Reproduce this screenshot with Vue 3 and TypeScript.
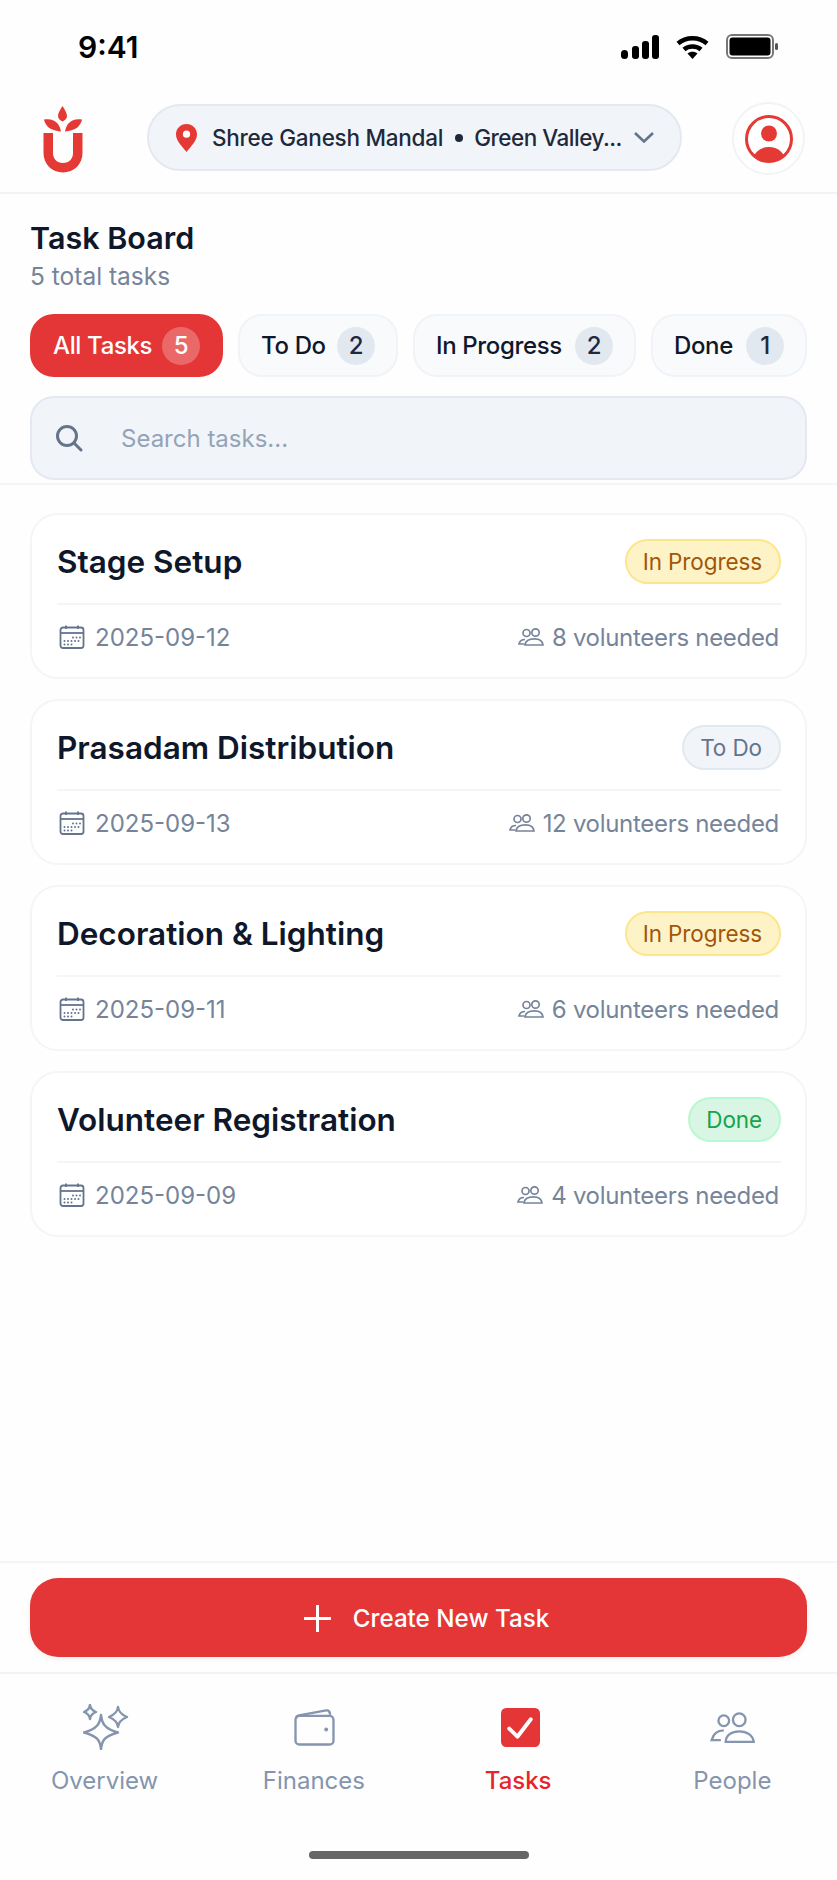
<script setup lang="ts">
interface Tab {
  label: string;
  count: number;
}

interface Task {
  title: string;
  status: 'progress' | 'todo' | 'done';
  statusLabel: string;
  date: string;
  volunteers: number;
}

const tabs: Tab[] = [
  { label: 'All Tasks', count: 5 },
  { label: 'To Do', count: 2 },
  { label: 'In Progress', count: 2 },
  { label: 'Done', count: 1 },
];

const tasks: Task[] = [
  { title: 'Stage Setup', status: 'progress', statusLabel: 'In Progress', date: '2025-09-12', volunteers: 8 },
  { title: 'Prasadam Distribution', status: 'todo', statusLabel: 'To Do', date: '2025-09-13', volunteers: 12 },
  { title: 'Decoration & Lighting', status: 'progress', statusLabel: 'In Progress', date: '2025-09-11', volunteers: 6 },
  { title: 'Volunteer Registration', status: 'done', statusLabel: 'Done', date: '2025-09-09', volunteers: 4 },
];

const dots: number[][] = [
  [14, 12.5], [17.5, 12.5], [21, 12.5],
  [5.5, 16], [9, 16], [12.5, 16], [16, 16], [19.5, 16],
  [5.5, 19.5], [9, 19.5], [12.5, 19.5],
];
</script>

<template>
  <div class="screen">
    <!-- Status bar -->
    <div class="status-bar">
      <span class="time">9:41</span>
      <div class="status-icons">
        <svg class="signal" viewBox="0 0 38 24" fill="#000">
          <rect x="0" y="15" width="7" height="9" rx="3.5" />
          <rect x="11" y="11" width="7" height="13" rx="3" />
          <rect x="21" y="6" width="7" height="18" rx="3" />
          <rect x="31" y="0" width="7" height="24" rx="3" />
        </svg>
        <svg class="wifi" viewBox="0 0 33 24" fill="none" stroke="#000" stroke-width="4.5">
          <path d="M2 8.5C10 1.5 23 1.5 31 8.5" />
          <path d="M8 14.5C12.5 10.5 20.5 10.5 25 14.5" />
          <path d="M11.5 18.5L16.5 24L21.5 18.5C18.5 16 14.5 16 11.5 18.5Z" fill="#000" stroke="none" />
        </svg>
        <svg class="battery" viewBox="0 0 52 25">
          <rect x="1" y="1" width="46" height="23" rx="5" fill="none" stroke="#777" stroke-width="2" />
          <rect x="3.5" y="3.5" width="41" height="18" rx="3" fill="#000" />
          <rect x="49" y="9" width="3" height="7" rx="1.5" fill="#555" />
        </svg>
      </div>
    </div>

    <!-- App header -->
    <header class="app-header">
      <svg class="logo" viewBox="0 0 40 68" fill="#e53935">
        <path d="M19.5 1C22 5 24 8 24 11C24 13.500 22 15.500 19.500 16.500C17 15.500 15 13.500 15 11C15 8 17 5 19.500 1Z" />
        <path d="M1 14.500C7 13.500 12 15 15 19C16.500 21 17.500 24 18 26.500C12 26 6 24 3.500 20C2 18 1.200 16 1 14.500Z" />
        <path d="M39 14.500C33 13.500 28 15 25 19C23.500 21 22.500 24 22 26.500C28 26 34 24 36.500 20C38 18 38.800 16 39 14.500Z" />
        <path d="M0.500 28H10V48C10 54 14 58 20 58C26 58 30 54 30 48V28H39.500V48C39.500 59 31 67.500 20 67.500C9 67.500 0.500 59 0.500 48Z" />
      </svg>

      <div class="mandal-pill">
        <svg class="pin" viewBox="0 0 21 28">
          <path d="M10.500 0C4.700 0 0 4.600 0 10.400C0 17 6.500 22.500 10.500 28C14.500 22.500 21 17 21 10.400C21 4.600 16.300 0 10.500 0Z" fill="#e53935" />
          <circle cx="10.500" cy="10.200" r="3.600" fill="#fff" />
        </svg>
        <span class="mandal-name">Shree Ganesh Mandal</span>
        <span class="mandal-dot"></span>
        <span class="mandal-name mandal-location">Green Valley...</span>
        <svg class="chevron" viewBox="0 0 20 11" fill="none" stroke="#64748b" stroke-width="2.600">
          <polyline points="1,1 10,9.500 19,1" />
        </svg>
      </div>

      <div class="avatar">
        <svg viewBox="0 0 48 48">
          <defs>
            <clipPath id="avatar-clip"><circle cx="24" cy="24" r="22" /></clipPath>
          </defs>
          <circle cx="24" cy="24" r="22.500" fill="#fff" stroke="#e53935" stroke-width="3" />
          <circle cx="24" cy="18.500" r="8" fill="#e53935" />
          <ellipse cx="24" cy="46" rx="16" ry="14" fill="#e53935" clip-path="url(#avatar-clip)" />
        </svg>
      </div>
    </header>

    <!-- Board heading, filters and search -->
    <section class="board-top">
      <h1 class="board-title">Task Board</h1>
      <p class="board-sub">5 total tasks</p>

      <div class="tabs">
        <button
          v-for="(tab, i) in tabs"
          :key="tab.label"
          type="button"
          class="tab"
          :class="{ 'tab-active': i === 0 }"
        >
          {{ tab.label }}
          <span class="tab-count">{{ tab.count }}</span>
        </button>
      </div>

      <div class="search">
        <svg class="search-icon" viewBox="0 0 28 28" fill="none" stroke="#64748b" stroke-width="3" stroke-linecap="round">
          <circle cx="12" cy="12" r="9.500" />
          <line x1="19" y1="19" x2="26" y2="26" />
        </svg>
        <span class="search-placeholder">Search tasks...</span>
      </div>
    </section>

    <!-- Task list -->
    <main class="task-list">
      <article v-for="task in tasks" :key="task.title" class="task-card">
        <div class="task-head">
          <h2 class="task-title">{{ task.title }}</h2>
          <span class="badge" :class="`badge-${task.status}`">{{ task.statusLabel }}</span>
        </div>
        <div class="task-meta">
          <span class="meta-item meta-date">
            <svg class="calendar" viewBox="0 0 26 24" fill="none" stroke="#64748b" stroke-width="1.800">
              <rect x="1.500" y="2.500" width="23" height="20.500" rx="2.500" />
              <line x1="1.500" y1="8" x2="24.500" y2="8" />
              <line x1="7" y1="0.500" x2="7" y2="4" />
              <line x1="19" y1="0.500" x2="19" y2="4" />
              <circle v-for="d in dots" :key="d.join()" :cx="d[0]" :cy="d[1]" r="1" fill="#64748b" stroke="none" />
            </svg>
            {{ task.date }}
          </span>
          <span class="meta-item meta-people">
            <svg class="people-small" viewBox="0 0 26 18" fill="none" stroke="#76849a" stroke-width="1.700">
              <circle cx="8.500" cy="5" r="3.500" />
              <circle cx="17.500" cy="4.500" r="3.700" />
              <path d="M7 11.500C3.500 11.500 1.500 13.500 1 16H6.500" />
              <path d="M7 17C7.500 12.500 12 10.800 16.500 10.800C21 10.800 24.500 13 25 17Z" />
            </svg>
            {{ task.volunteers }} volunteers needed
          </span>
        </div>
      </article>
    </main>

    <!-- Create action -->
    <div class="action-bar">
      <button type="button" class="create-btn">
        <svg class="plus" viewBox="0 0 27 27" stroke="#fff" stroke-width="3">
          <line x1="13.500" y1="0" x2="13.500" y2="27" />
          <line x1="0" y1="13.500" x2="27" y2="13.500" />
        </svg>
        Create New Task
      </button>
    </div>

    <!-- Bottom navigation -->
    <nav class="bottom-nav">
      <div class="nav-item">
        <div class="nav-icon-box">
          <svg class="icon-overview" viewBox="0 0 46 46" fill="none" stroke="#8495ad" stroke-width="2.400" stroke-linejoin="round">
            <path d="M18 11C19 20 22 25 35 28.500C22 32 19 36 18 45C17 36 14 32 1 28.500C14 25 17 20 18 11Z" />
            <path d="M7 1C7.500 4.500 9 6.500 13 8C9 9.500 7.500 11.500 7 15C6.500 11.500 5 9.500 1 8C5 6.500 6.500 4.500 7 1Z" />
            <path d="M35 3C35.500 8 38 10.500 44 13C38 15.500 35.500 18 35 23C34.500 18 32 15.500 26 13C32 10.500 34.500 8 35 3Z" />
          </svg>
        </div>
        <span>Overview</span>
      </div>
      <div class="nav-item">
        <div class="nav-icon-box">
          <svg class="icon-wallet" viewBox="0 0 42 38" fill="none" stroke="#8495ad" stroke-width="2.400" stroke-linejoin="round">
            <path d="M2 10C2 8 3 7 5 6.500L33 1.500C35.500 1 37 3 37 6" />
            <rect x="1.500" y="7" width="39" height="29.500" rx="4" />
            <circle cx="33" cy="21" r="2" fill="#8495ad" stroke="none" />
          </svg>
        </div>
        <span>Finances</span>
      </div>
      <div class="nav-item nav-item-active">
        <div class="nav-icon-box">
          <svg class="icon-tasks" viewBox="0 0 38 38">
            <rect width="38" height="38" rx="5" fill="#e43636" />
            <polyline points="8,20 16,28 29,11" fill="none" stroke="#fff" stroke-width="3.800" stroke-linecap="round" stroke-linejoin="round" />
          </svg>
        </div>
        <span>Tasks</span>
      </div>
      <div class="nav-item">
        <div class="nav-icon-box">
          <svg class="icon-people" viewBox="0 0 46 32" fill="none" stroke="#8495ad" stroke-width="2.400">
            <circle cx="14" cy="9" r="5.500" />
            <circle cx="30" cy="8" r="6.500" />
            <path d="M14 19C7 19 3 23 1.500 29H11" />
            <path d="M16 31C16 24 22 20 30 20C38 20 44 24 45 31Z" />
          </svg>
        </div>
        <span>People</span>
      </div>
    </nav>

    <div class="home-bar"><span class="home-indicator"></span></div>
  </div>
</template>

<style>
body {
  background: #fefefe;
}
</style>

<style scoped>
.screen {
  display: flex;
  flex-direction: column;
  min-height: 1880px;
  background: #fefefe;
  font-family: Inter, "Liberation Sans", sans-serif;
  color: #0f172a;
}

/* Status bar */
.status-bar {
  display: flex;
  align-items: center;
  justify-content: space-between;
  height: 92px;
  padding: 1px 59px 0 78px;
  box-sizing: border-box;
}

.time {
  font-size: 30px;
  font-weight: 600;
  color: #000;
}

.status-icons {
  display: flex;
  align-items: center;
}

.signal {
  width: 38px;
  height: 24px;
}

.wifi {
  width: 33px;
  height: 24px;
  margin-left: 17px;
}

.battery {
  width: 52px;
  height: 25px;
  margin-left: 17px;
}

/* Header */
.app-header {
  display: flex;
  align-items: flex-start;
  height: 102px;
  padding: 10px 32px 0 43px;
  border-bottom: 2px solid #f1f3f7;
  box-sizing: border-box;
}

.logo {
  width: 40px;
  height: 68px;
  margin-top: 3px;
  flex-shrink: 0;
}

.mandal-pill {
  display: flex;
  align-items: center;
  width: 535px;
  height: 67px;
  margin: 2px 0 0 64px;
  padding-left: 27px;
  box-sizing: border-box;
  background: #f1f5f9;
  border: 2px solid #e4e9f1;
  border-radius: 34px;
}

.pin {
  width: 21px;
  height: 28px;
  flex-shrink: 0;
  margin-right: 15px;
}

.mandal-name {
  font-size: 22.5px;
  font-weight: 500;
  letter-spacing: -0.25px;
  white-space: nowrap;
  color: #1e293b;
}

.mandal-location {
  letter-spacing: -0.5px;
}

.mandal-dot {
  width: 8px;
  height: 8px;
  margin: 0 11px 0 12px;
  border-radius: 50%;
  background: #1e293b;
  flex-shrink: 0;
}

.chevron {
  width: 20px;
  height: 11px;
  margin-left: 12px;
  flex-shrink: 0;
}

.avatar {
  display: flex;
  align-items: center;
  justify-content: center;
  width: 73px;
  height: 73px;
  margin-left: 50px;
  box-sizing: border-box;
  border: 2px solid #f1f3f7;
  border-radius: 50%;
  background: #fff;
}

.avatar svg {
  width: 48px;
  height: 48px;
}

/* Board heading */
.board-top {
  padding: 26px 30px 3px;
  border-bottom: 2px solid #f3f5f8;
}

.board-title {
  margin: 0;
  font-size: 30.5px;
  line-height: 36px;
  font-weight: 600;
  color: #0f172a;
}

.board-sub {
  margin: 5px 0 0;
  font-size: 24.5px;
  line-height: 30px;
  color: #76849a;
}

.tabs {
  display: flex;
  gap: 15px;
  margin-top: 23px;
}

.tab {
  display: flex;
  align-items: center;
  justify-content: space-between;
  height: 63px;
  padding: 0 21px 0 21px;
  border: 2px solid #f0f3f7;
  border-radius: 24px;
  background: #f8fafc;
  font-family: inherit;
  font-size: 24px;
  font-weight: 500;
  letter-spacing: -0.35px;
  color: #0f172a;
  white-space: nowrap;
}

.tab:nth-child(1) { width: 193px; }
.tab:nth-child(2) { width: 160px; }
.tab:nth-child(3) { width: 223px; }
.tab:nth-child(4) { width: 156px; }

.tab-active {
  background: #e43636;
  border-color: #e43636;
  color: #fff;
}

.tab-count {
  display: flex;
  align-items: center;
  justify-content: center;
  width: 38px;
  height: 38px;
  border-radius: 50%;
  background: #e2e8f0;
  color: #1e293b;
  font-size: 24px;
}

.tab-active .tab-count {
  background: rgba(255, 255, 255, 0.25);
  color: #fff;
}

.search {
  display: flex;
  align-items: center;
  height: 84px;
  margin-top: 19px;
  padding-left: 23px;
  box-sizing: border-box;
  background: #f1f5f9;
  border: 2px solid #e4e9f1;
  border-radius: 24px;
}

.search-icon {
  width: 28px;
  height: 28px;
  flex-shrink: 0;
}

.search-placeholder {
  margin-left: 38px;
  font-size: 24px;
  color: #94a3b8;
}

/* Task list */
.task-list {
  flex: 1;
  display: flex;
  flex-direction: column;
  gap: 20px;
  padding: 28px 30px 0;
}

.task-card {
  height: 166px;
  padding: 25px 24px 0 25px;
  box-sizing: border-box;
  background: #fff;
  border: 2px solid #f3f5f9;
  border-radius: 28px;
}

.task-head {
  display: flex;
  align-items: center;
  justify-content: space-between;
  height: 65px;
  padding-bottom: 20px;
  box-sizing: border-box;
  border-bottom: 2px solid #f3f5f8;
}

.task-title {
  margin: 0;
  font-size: 31.5px;
  font-weight: 600;
  color: #0f172a;
}

.badge {
  padding: 0 17px 0 16px;
  height: 45px;
  line-height: 41px;
  box-sizing: border-box;
  border: 2px solid;
  border-radius: 23px;
  font-size: 22.5px;
  letter-spacing: -0.1px;
  white-space: nowrap;
}

.badge-progress {
  background: #fef3c7;
  border-color: #fde68a;
  color: #a1560c;
}

.badge-todo {
  background: #f1f5f9;
  border-color: #e2e8f0;
  color: #64748b;
}

.badge-done {
  background: #d9f5e4;
  border-color: #bbf7d0;
  color: #16a34a;
}

.task-meta {
  display: flex;
  align-items: center;
  justify-content: space-between;
  height: 64px;
  padding: 0 2px;
  font-size: 24px;
  color: #76849a;
}

.meta-item {
  display: flex;
  align-items: center;
}

.meta-date {
  gap: 10px;
}

.meta-people {
  gap: 8px;
  letter-spacing: -0.3px;
}

.calendar {
  width: 26px;
  height: 24px;
}

.people-small {
  width: 26px;
  height: 18px;
}

/* Action bar */
.action-bar {
  padding: 15px 30px;
  border-top: 2px solid #f3f5f8;
  border-bottom: 2px solid #f1f3f7;
}

.create-btn {
  display: flex;
  align-items: center;
  justify-content: center;
  gap: 22px;
  width: 100%;
  height: 79px;
  padding: 2px 0 0 16px;
  border: none;
  border-radius: 28px;
  background: #e43636;
  box-shadow: 0 2px 6px rgba(0, 0, 0, 0.06);
  font-family: inherit;
  font-size: 24.2px;
  font-weight: 500;
  color: #fff;
}

.plus {
  width: 27px;
  height: 27px;
}

/* Bottom nav */
.bottom-nav {
  display: grid;
  grid-template-columns: repeat(4, 1fr);
  height: 133px;
  padding-top: 29px;
  box-sizing: border-box;
}

.nav-item {
  display: flex;
  flex-direction: column;
  align-items: center;
  gap: 15px;
  font-size: 24px;
  line-height: 30px;
  color: #8495ad;
}

.nav-item-active {
  margin-right: 10px;
  color: #e8232a;
  font-weight: 500;
}

.nav-icon-box {
  display: flex;
  align-items: center;
  justify-content: center;
  height: 48px;
}

.icon-overview {
  width: 46px;
  height: 46px;
  margin-left: 3px;
}

.icon-wallet {
  width: 41px;
  height: 37px;
  margin-left: 2px;
}

.icon-tasks {
  width: 39px;
  height: 39px;
  margin-left: 4px;
}

.icon-people {
  width: 45px;
  height: 31px;
}

.home-bar {
  display: flex;
  justify-content: center;
  height: 73px;
  padding-top: 44px;
  box-sizing: border-box;
}

.home-indicator {
  width: 220px;
  height: 8px;
  border-radius: 4px;
  background: #666;
}
</style>
